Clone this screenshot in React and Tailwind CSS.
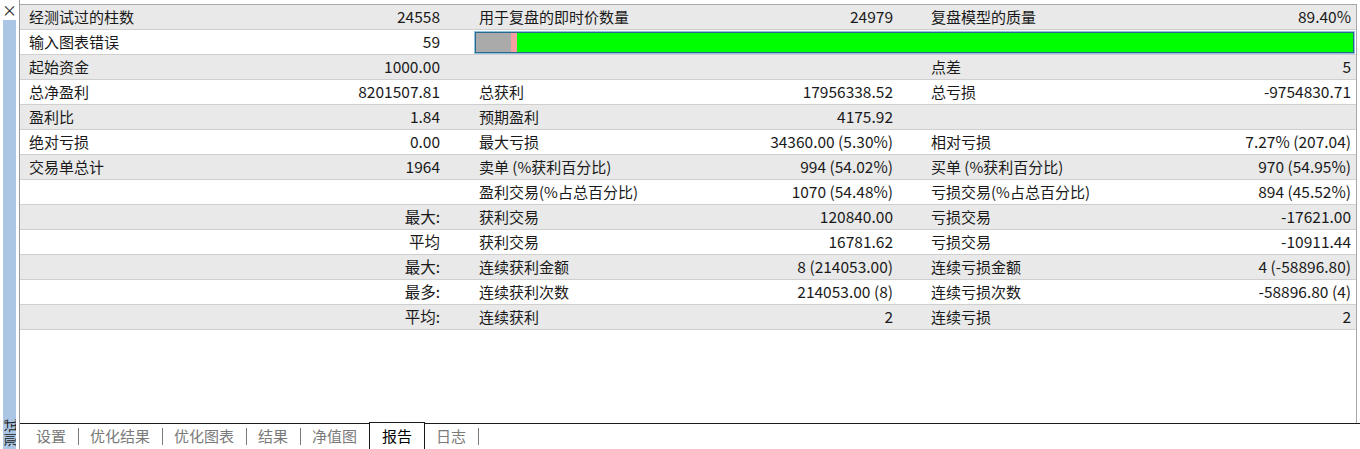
import React from "react";

const rows = [
  [["经测试过的柱数", "24558"], ["用于复盘的即时价数量", "24979"], ["复盘模型的质量", "89.40%"]],
  "bar",
  [["起始资金", "1000.00"], ["", ""], ["点差", "5"]],
  [["总净盈利", "8201507.81"], ["总获利", "17956338.52"], ["总亏损", "-9754830.71"]],
  [["盈利比", "1.84"], ["预期盈利", "4175.92"], ["", ""]],
  [["绝对亏损", "0.00"], ["最大亏损", "34360.00 (5.30%)"], ["相对亏损", "7.27% (207.04)"]],
  [["交易单总计", "1964"], ["卖单 (%获利百分比)", "994 (54.02%)"], ["买单 (%获利百分比)", "970 (54.95%)"]],
  [["", ""], ["盈利交易(%占总百分比)", "1070 (54.48%)"], ["亏损交易(%占总百分比)", "894 (45.52%)"]],
  [["", "最大:"], ["获利交易", "120840.00"], ["亏损交易", "-17621.00"]],
  [["", "平均"], ["获利交易", "16781.62"], ["亏损交易", "-10911.44"]],
  [["", "最大:"], ["连续获利金额", "8 (214053.00)"], ["连续亏损金额", "4 (-58896.80)"]],
  [["", "最多:"], ["连续获利次数", "214053.00 (8)"], ["连续亏损次数", "-58896.80 (4)"]],
  [["", "平均:"], ["连续获利", "2"], ["连续亏损", "2"]],
];

const tabs = ["设置", "优化结果", "优化图表", "结果", "净值图", "报告", "日志"];

function Cell({ label, value, pr }) {
  return (
    <div className={`flex items-center justify-between whitespace-nowrap pl-[9px] ${pr}`}>
      <span>{label}</span>
      <span className="text-[15.5px]">{value}</span>
    </div>
  );
}

export default function App() {
  return (
    <div
      className="flex h-[449px] w-[1360px] overflow-hidden bg-white text-[15px] text-[#1a1a1a]"
      style={{ fontFamily: '"Noto Sans CJK SC", "Liberation Sans", sans-serif' }}
    >
      {/* ── left dock strip ── */}
      <div className="flex w-[20px] shrink-0 flex-col border-r border-[#9a9a9a] bg-white">
        <div className="flex h-[20px] items-center justify-center pb-[2px] text-[15px] leading-none text-[#222]">×</div>
        <div className="mx-[3px] flex flex-1 flex-col justify-end overflow-hidden bg-[#abc6e4]">
          <div className="flex h-[32px] items-center justify-center">
            <span className="-rotate-90 whitespace-nowrap text-[14px] leading-none">测试</span>
          </div>
        </div>
      </div>

      {/* ── main ── */}
      <div className="flex min-w-0 flex-1 flex-col">
        <div className="mt-[4px] mr-[3px] flex flex-1 flex-col border-t border-r border-[#a8a8a8]">
          {rows.map((row, i) => {
            const bg = i % 2 === 0 ? "bg-[#e9e9e9]" : "bg-white";
            if (row === "bar") {
              return (
                <div key={i} className={`grid h-[25px] grid-cols-[450px_1fr] border-b border-[#cfcfcf] ${bg}`}>
                  <Cell label="输入图表错误" value="59" pr="pr-[30px]" />
                  <div className="flex items-center pl-[4px] pr-[1px]">
                    <div className="flex h-[23px] w-full border border-[#8fc0de]">
                      <div className="flex h-full w-full border border-[#2a6890]">
                        <div className="w-[35px] bg-[#aaaaaa]" />
                        <div className="w-[6px] bg-[#f5a0a0]" />
                        <div className="flex-1 bg-[#00ff00]" />
                      </div>
                    </div>
                  </div>
                </div>
              );
            }
            return (
              <div key={i} className={`grid h-[25px] grid-cols-[450px_452px_1fr] border-b border-[#cfcfcf] ${bg}`}>
                <Cell label={row[0][0]} value={row[0][1]} pr="pr-[30px]" />
                <Cell label={row[1][0]} value={row[1][1]} pr="pr-[29px]" />
                <Cell label={row[2][0]} value={row[2][1]} pr="pr-[5px]" />
              </div>
            );
          })}
        </div>

        {/* ── tab bar ── */}
        <div className="flex h-[26px] shrink-0 items-stretch bg-white text-[15px]">
          <div className="w-[5px] border-t border-[#1a1a1a]" />
          {tabs.map((t) => {
            if (t === "报告") {
              return (
                <div
                  key={t}
                  className="-ml-px -mt-[1px] flex items-center border border-b-0 border-[#1a1a1a] bg-white px-[12px] text-black"
                >
                  {t}
                </div>
              );
            }
            return (
              <div key={t} className="flex items-center border-t border-[#1a1a1a] pl-[11px] text-[#7a7a7a]">
                <span>{t}</span>
                <span className={`ml-[12px] h-[17px] w-px ${t === "净值图" ? "bg-transparent" : "bg-[#7a7a7a]"}`} />
              </div>
            );
          })}
          <div className="flex-1 border-t border-[#1a1a1a]" />
        </div>
      </div>
    </div>
  );
}
